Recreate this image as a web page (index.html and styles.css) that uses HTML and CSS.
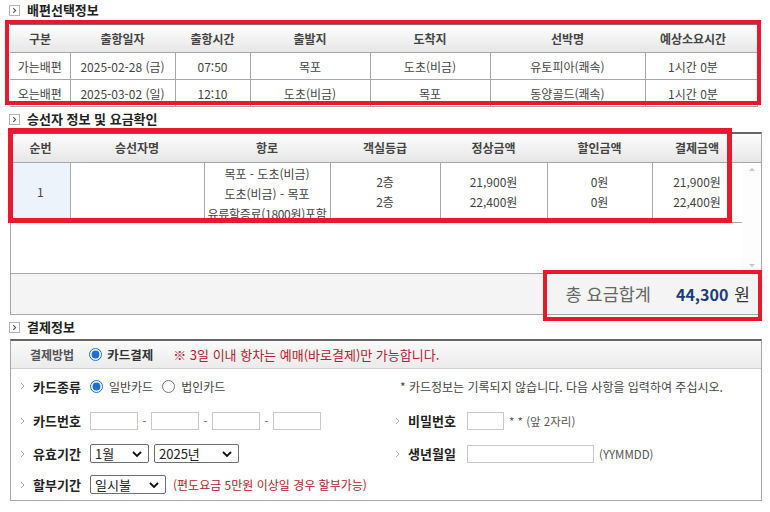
FILE: index.html
```html
<!DOCTYPE html>
<html lang="ko">
<head>
<meta charset="utf-8">
<title>배편선택정보</title>
<link rel="stylesheet" href="styles.css">
</head>
<body>
<div class="page">
  <h2 class="title">
    <svg class="ico" viewBox="0 0 11 11"><rect x="0.5" y="0.5" width="10" height="10" fill="#fff" stroke="#b5b5b5"/><path d="M4.2 3.2 L6.6 5.5 L4.2 7.8" fill="none" stroke="#555" stroke-width="1.1"/></svg>
    배편선택정보
  </h2>
  <table class="grid t1">
    <colgroup><col class="c60"><col class="c105"><col class="c75"><col class="c120"><col class="c120"><col class="c155"><col class="c112"></colgroup>
    <thead>
      <tr><th>구분</th><th>출항일자</th><th>출항시간</th><th>출발지</th><th>도착지</th><th>선박명</th><th class="pr">예상소요시간</th></tr>
    </thead>
    <tbody>
      <tr><td>가는배편</td><td>2025-02-28 (금)</td><td>07:50</td><td>목포</td><td>도초(비금)</td><td>유토피아(쾌속)</td><td class="pr">1시간 0분</td></tr>
      <tr><td>오는배편</td><td>2025-03-02 (일)</td><td>12:10</td><td>도초(비금)</td><td>목포</td><td>동양골드(쾌속)</td><td class="pr">1시간 0분</td></tr>
    </tbody>
  </table>

  <h2 class="title title-2">
    <svg class="ico" viewBox="0 0 11 11"><rect x="0.5" y="0.5" width="10" height="10" fill="#fff" stroke="#b5b5b5"/><path d="M4.2 3.2 L6.6 5.5 L4.2 7.8" fill="none" stroke="#555" stroke-width="1.1"/></svg>
    승선자 정보 및 요금확인
  </h2>
  <div class="fare">
    <table class="grid head">
      <colgroup><col class="c59"><col class="c134"><col class="c126"><col class="c110"><col class="c107"><col class="c105"><col class="c90"><col></colgroup>
      <thead>
        <tr><th>순번</th><th>승선자명</th><th>항로</th><th>객실등급</th><th>정상금액</th><th>할인금액</th><th>결제금액</th><th></th></tr>
      </thead>
    </table>
    <div class="fare-body">
      <div class="scroll-area">
        <table class="grid body">
          <colgroup><col class="c59"><col class="c134"><col class="c126"><col class="c110"><col class="c107"><col class="c105"><col class="c90"></colgroup>
          <tbody>
            <tr>
              <td class="no">1</td>
              <td></td>
              <td class="route"><div>목포 - 도초(비금)</div><div>도초(비금) - 목포</div><div class="clip">유류할증료(1800원)포함</div></td>
              <td><div>2층</div><div>2층</div></td>
              <td><div>21,900원</div><div>22,400원</div></td>
              <td><div>0원</div><div>0원</div></td>
              <td><div>21,900원</div><div>22,400원</div></td>
            </tr>
          </tbody>
        </table>
      </div>
      <div class="scrollbar"><span class="sb-up"></span><span class="sb-down"></span></div>
    </div>
    <div class="total">
      <span class="t-lbl">총 요금합계</span>
      <span class="t-amt">44,300</span>
      <span class="t-won">원</span>
    </div>
  </div>

  <h2 class="title title-3">
    <svg class="ico" viewBox="0 0 11 11"><rect x="0.5" y="0.5" width="10" height="10" fill="#fff" stroke="#b5b5b5"/><path d="M4.2 3.2 L6.6 5.5 L4.2 7.8" fill="none" stroke="#555" stroke-width="1.1"/></svg>
    결제정보
  </h2>
  <div class="pay">
    <div class="method">
      <span class="m-lbl">결제방법</span>
      <input class="rad" type="radio" name="pm" checked>
      <span class="m-opt">카드결제</span>
      <span class="note big">※ 3일 이내 항차는 예매(바로결제)만 가능합니다.</span>
    </div>
    <div class="form">
      <div class="cell">
        <svg class="arr" viewBox="0 0 5 8"><path d="M1 1 L4 4 L1 7" fill="none" stroke="#aaa" stroke-width="1"/></svg>
        <span class="flabel">카드종류</span>
        <input class="rad" type="radio" name="ct" checked>
        <span class="ropt">일반카드</span>
        <input class="rad" type="radio" name="ct">
        <span class="ropt">법인카드</span>
      </div>
      <div class="cell r">
        <span class="info">* 카드정보는 기록되지 않습니다. 다음 사항을 입력하여 주십시오.</span>
      </div>

      <div class="cell">
        <svg class="arr" viewBox="0 0 5 8"><path d="M1 1 L4 4 L1 7" fill="none" stroke="#aaa" stroke-width="1"/></svg>
        <span class="flabel">카드번호</span>
        <input class="inp" type="text"><span class="dash">-</span><input class="inp" type="text"><span class="dash">-</span><input class="inp" type="text"><span class="dash">-</span><input class="inp" type="text">
      </div>
      <div class="cell r">
        <svg class="arr" viewBox="0 0 5 8"><path d="M1 1 L4 4 L1 7" fill="none" stroke="#aaa" stroke-width="1"/></svg>
        <span class="flabel wide">비밀번호</span>
        <input class="inp pw" type="password">
        <span class="hint">* * (앞 2자리)</span>
      </div>

      <div class="cell">
        <svg class="arr" viewBox="0 0 5 8"><path d="M1 1 L4 4 L1 7" fill="none" stroke="#aaa" stroke-width="1"/></svg>
        <span class="flabel">유효기간</span>
        <span class="selw s-month"><select class="sel"><option>1월</option></select><svg class="chev" viewBox="0 0 10 6"><path d="M1 1 L5 5 L9 1" fill="none" stroke="#111" stroke-width="1.8"/></svg></span>
        <span class="selw s-year"><select class="sel"><option>2025년</option></select><svg class="chev" viewBox="0 0 10 6"><path d="M1 1 L5 5 L9 1" fill="none" stroke="#111" stroke-width="1.8"/></svg></span>
      </div>
      <div class="cell r">
        <svg class="arr" viewBox="0 0 5 8"><path d="M1 1 L4 4 L1 7" fill="none" stroke="#aaa" stroke-width="1"/></svg>
        <span class="flabel wide">생년월일</span>
        <input class="inp birth" type="text">
        <span class="hint">(YYMMDD)</span>
      </div>

      <div class="cell">
        <svg class="arr" viewBox="0 0 5 8"><path d="M1 1 L4 4 L1 7" fill="none" stroke="#aaa" stroke-width="1"/></svg>
        <span class="flabel">할부기간</span>
        <span class="selw s-inst"><select class="sel"><option>일시불</option></select><svg class="chev" viewBox="0 0 10 6"><path d="M1 1 L5 5 L9 1" fill="none" stroke="#111" stroke-width="1.8"/></svg></span>
        <span class="note small">(편도요금 5만원 이상일 경우 할부가능)</span>
      </div>
      <div class="cell r"></div>
    </div>
  </div>

  <div class="mark m1"></div>
  <div class="mark m2"></div>
  <div class="mark m3"></div>
</div>
</body>
</html>
```

FILE: styles.css
```css
* { box-sizing: border-box; }
html, body { margin: 0; padding: 0; background: #fff; }
body {
  font-family: "Noto Sans CJK KR", "Noto Sans", sans-serif;
  font-size: 12px;
  color: #333;
}
.page { position: relative; width: 770px; height: 512px; overflow: hidden; }

/* section titles */
.title {
  margin: 0;
  height: 20px;
  padding-left: 9px;
  display: flex;
  align-items: center;
  gap: 7px;
  font-size: 13px;
  font-weight: 700;
  color: #222;
  line-height: 20px;
}
.ico { width: 11px; height: 11px; flex: none; }
.title-2 { margin-top: 2px; }
.title-3 { margin-top: 1px; height: 23px; }

/* tables */
.grid { border-collapse: collapse; table-layout: fixed; }
.grid th {
  height: 28px;
  padding: 0;
  font-weight: 700;
  color: #444;
  font-size: 12px;
  background: linear-gradient(#fdfdfd, #e6e6e6);
  border-bottom: 1px solid #a8a8a8;
  text-align: center;
}
.grid td {
  padding: 0;
  text-align: center;
  color: #444;
  border: 1px solid #a8a8a8;
}
.c59 { width: 59px; } .c60 { width: 60px; } .c75 { width: 75px; } .c90 { width: 90px; }
.c105 { width: 105px; } .c107 { width: 107px; } .c110 { width: 110px; } .c112 { width: 112px; }
.c120 { width: 120px; } .c126 { width: 126px; } .c134 { width: 134px; } .c155 { width: 155px; }

.t1 { width: 747px; margin: 4px 0 0 10px; border-top: 1px solid #777; }
.t1 td { height: 27px; }
.t1 tr:first-child td { border-top: none; }
.t1 td:first-child { border-left: none; }
.t1 .pr { padding-right: 16px; }

/* fare section */
.fare {
  margin: 3px 0 0 10px;
  width: 752px;
  border: 1px solid #a8a8a8;
  border-top: 2px solid #666;
}
.head { width: 100%; }
.fare-body { display: flex; height: 110px; }
.scroll-area { width: 731px; flex: none; }
.body { width: 731px; }
.body td { height: 60px; line-height: 20px; border-top: none; }
.body td:first-child { border-left: none; background: #edf3fb; }
.body .route { line-height: 20px; vertical-align: top; padding-top: 1px; }
.body .route div { height: 20px; }
.body .route .clip { height: 18px; overflow: hidden; white-space: nowrap; letter-spacing: -0.3px; }
.scrollbar {
  flex: 1;
  display: flex;
  flex-direction: column;
  justify-content: space-between;
  align-items: center;
  padding: 5px 0 6px;
  background: #fdfdfd;
}
.sb-up, .sb-down { width: 0; height: 0; border-left: 3px solid transparent; border-right: 3px solid transparent; }
.sb-up { border-bottom: 3px solid #c4c4c4; }
.sb-down { border-top: 3px solid #c4c4c4; }
.total {
  height: 41px;
  border-top: 1px solid #a8a8a8;
  background: #f4f4f4;
  display: flex;
  justify-content: flex-end;
  align-items: center;
  padding-right: 11px;
  font-size: 16px;
}
.t-lbl { color: #666; margin-right: 25px; font-size: 17.5px; }
.t-amt { color: #1d3c7a; font-weight: 700; }
.t-won { color: #333; margin-left: 6px; font-size: 17px; }

/* payment */
.pay {
  margin: 0 0 0 10px;
  width: 752px;
  border: 1px solid #a8a8a8;
  border-top: 2px solid #666;
}
.method {
  height: 28px;
  background: linear-gradient(#fbfbfb, #ebebeb);
  border-bottom: 1px solid #cfcfcf;
  display: flex;
  align-items: center;
  padding-left: 19px;
}
.m-lbl { font-weight: 700; color: #555; margin-right: 15px; }
.m-opt { font-weight: 700; color: #333; font-size: 12.5px; margin-left: 5px; margin-right: 20px; }
.note { color: #b0232f; }
.note.big { font-size: 13px; }
.note.small { font-size: 12px; margin-left: 7px; }
.rad {
  margin: 0;
  width: 13px;
  height: 13px;
  accent-color: #1a6fd6;
  flex: none;
}
.form {
  display: grid;
  grid-template-columns: 374px 1fr;
  grid-template-rows: 35px 34px 32px 30px;
}
.cell { display: flex; align-items: center; padding-left: 9px; }
.cell.r { padding-left: 10px; }
.arr { width: 5px; height: 8px; flex: none; margin-right: 8px; }
.flabel { font-weight: 700; font-size: 13px; color: #222; width: 57px; flex: none; }
.flabel.wide { width: 59px; }
.ropt { color: #444; margin-left: 6px; margin-right: 9px; }
.info { color: #444; font-size: 12px; padding-left: 5px; }
.inp {
  height: 18px;
  width: 48px;
  border: 1px solid #c9c9c9;
  padding: 0;
  background: #fff;
  flex: none;
}
.inp.pw { width: 37px; }
.inp.birth { width: 127px; }
.dash { width: 13px; text-align: center; color: #555; font-size: 11px; }
.hint { color: #555; font-size: 11.5px; margin-left: 5px; }
.selw { position: relative; display: inline-flex; flex: none; }
.s-month { width: 59px; }
.s-year { width: 85px; margin-left: 5px; }
.s-inst { width: 76px; }
.sel {
  appearance: none;
  -webkit-appearance: none;
  width: 100%;
  height: 19px;
  padding: 0 0 0 4px;
  margin: 0;
  border: 1px solid #6f6f6f;
  border-radius: 2px;
  background: #fff;
  font-family: inherit;
  font-size: 13px;
  line-height: 17px;
  color: #222;
}
.chev { position: absolute; right: 7px; top: 7px; width: 10px; height: 6px; pointer-events: none; }

/* red annotation boxes */
.mark { position: absolute; border: 4px solid #e8192c; pointer-events: none; }
.m1 { left: 5px; top: 20px; width: 756px; height: 85px; }
.m2 { left: 8px; top: 128px; width: 724px; height: 95px; border-width: 5px; }
.m3 { left: 543px; top: 270px; width: 219px; height: 51px; }
```
